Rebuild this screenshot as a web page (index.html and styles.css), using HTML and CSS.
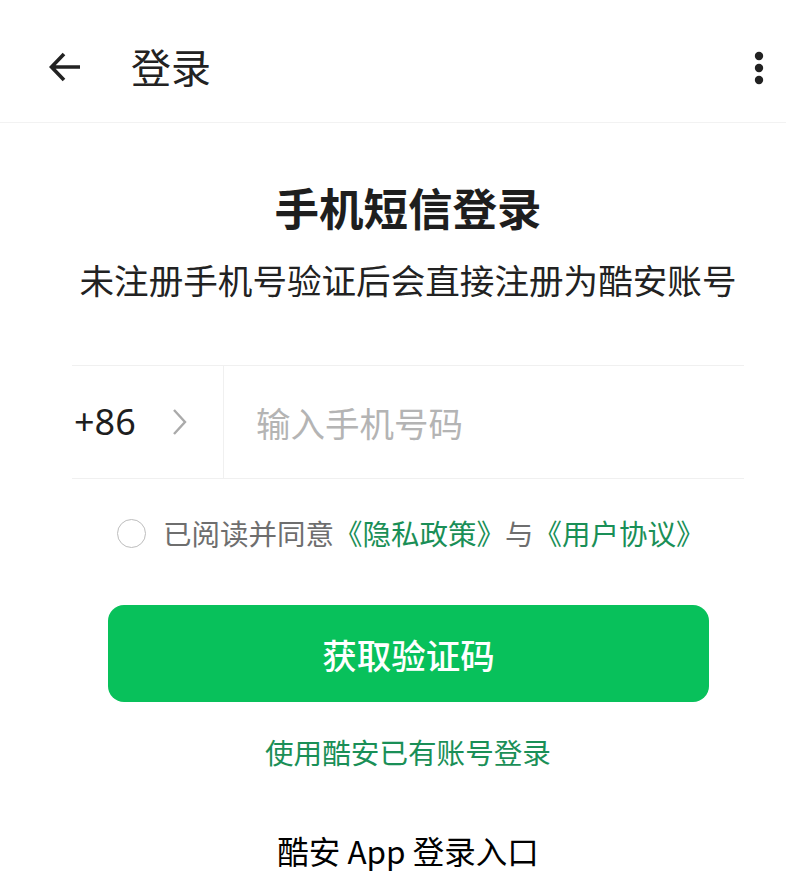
FILE: index.html
```html
<!DOCTYPE html>
<html lang="zh-CN">
<head>
<meta charset="utf-8">
<title>登录</title>
<link rel="stylesheet" href="styles.css">
</head>
<body>
<div class="page">
  <header class="topbar">
    <div class="back">
      <svg width="36" height="36" viewBox="0 0 36 36"><path d="M33 18H5M17 5L4.5 18L17 31" fill="none" stroke="#222" stroke-width="3.6" stroke-linecap="butt" stroke-linejoin="miter"/></svg>
    </div>
    <div class="topbar-title">登录</div>
    <div class="more">
      <svg width="10" height="34" viewBox="0 0 10 34"><circle cx="5" cy="5" r="4.2" fill="#222"/><circle cx="5" cy="17" r="4.2" fill="#222"/><circle cx="5" cy="29" r="4.2" fill="#222"/></svg>
    </div>
  </header>

  <main class="content">
    <h1 class="title">手机短信登录</h1>
    <p class="subtitle">未注册手机号验证后会直接注册为酷安账号</p>

    <div class="phone-row">
      <div class="code">
        <span class="code-num">+86</span>
        <svg class="chev" width="16" height="28" viewBox="0 0 16 28"><path d="M2 2L13 14L2 26" fill="none" stroke="#aaa" stroke-width="2.4"/></svg>
      </div>
      <div class="phone-input">输入手机号码</div>
    </div>

    <div class="agree">
      <span class="radio"></span>
      <span class="agree-text">已阅读并同意<span class="green">《隐私政策》</span>与<span class="green">《用户协议》</span></span>
    </div>

    <div class="btn-wrap">
      <button class="primary">获取验证码</button>
    </div>

    <div class="alt-login">使用酷安已有账号登录</div>
  </main>

  <footer class="foot">酷安 App 登录入口</footer>
</div>
</body>
</html>
```

FILE: styles.css
```css
* { box-sizing: border-box; }
html, body { margin: 0; padding: 0; background: #fff; }
body {
  font-family: "Noto Sans CJK SC", "Noto Sans", sans-serif;
  color: #222;
  width: 786px;
  height: 876px;
  overflow: hidden;
}
.topbar {
  height: 123px;
  display: flex;
  align-items: center;
  border-bottom: 1px solid #f2f2f2;
  padding: 13px 22px 0 47px;
}
.back { width: 36px; height: 36px; display: flex; margin-top: -1px; }
.topbar-title {
  margin-left: 48px;
  font-size: 40px;
  line-height: 44px;
  color: #222;
  flex: 1;
  margin-top: -3px;
}
.more { display: flex; margin-right: 0; }

.content {
  padding: 0 42px 0 72px;
  display: flex;
  flex-direction: column;
}
.title {
  margin: 54px 0 0;
  font-size: 44.5px;
  line-height: 60px;
  font-weight: 700;
  text-align: center;
  color: #1e1e1e;
}
.subtitle {
  margin: 18px 0 0;
  font-size: 34.6px;
  line-height: 48px;
  text-align: center;
  color: #222;
}
.phone-row {
  margin-top: 62px;
  height: 114px;
  border-top: 1px solid #f0f0f0;
  border-bottom: 1px solid #f0f0f0;
  display: flex;
  align-items: stretch;
}
.code {
  width: 152px;
  border-right: 1px solid #f0f0f0;
  display: flex;
  align-items: center;
  padding-left: 2px;
}
.code-num {
  font-size: 36px;
  line-height: 40px;
  color: #1e1e1e;
  font-family: "Noto Sans", "Noto Sans CJK SC", sans-serif;
}
.chev { margin-left: 36px; }
.phone-input {
  display: flex;
  align-items: center;
  padding-left: 32px;
  font-size: 34.5px;
  color: #b4b4b4;
}
.agree {
  margin-top: 34px;
  height: 40px;
  display: flex;
  align-items: center;
  padding-left: 45px;
}
.radio {
  width: 29px;
  height: 29px;
  border: 1.6px solid #bdbdbd;
  border-radius: 50%;
  flex: none;
}
.agree-text {
  margin-left: 17px;
  font-size: 28.5px;
  line-height: 40px;
  color: #6e6e6e;
  white-space: nowrap;
}
.green { color: #1a8f57; }
.btn-wrap { padding: 0 35px 0 36px; margin-top: 52px; }
.primary {
  width: 100%;
  height: 97px;
  border: none;
  border-radius: 16px;
  background: #08c15b;
  color: #fff;
  font-family: "Noto Sans CJK SC", sans-serif;
  font-size: 34.5px;
  font-weight: 500;
  letter-spacing: 0;
  padding: 0;
  display: block;
}
.alt-login {
  margin-top: 30px;
  text-align: center;
  font-size: 28.6px;
  line-height: 40px;
  color: #1a8f57;
}
.foot {
  margin-top: 58px;
  text-align: center;
  font-size: 31.5px;
  line-height: 40px;
  color: #000;
  padding-left: 30px;
}
```
